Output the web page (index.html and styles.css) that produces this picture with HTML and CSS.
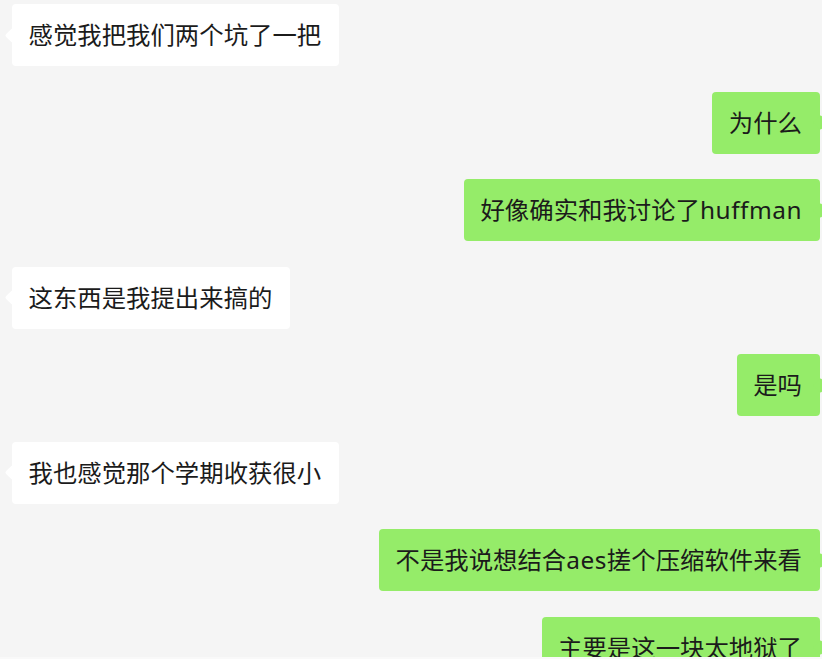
FILE: index.html
```html
<!DOCTYPE html>
<html lang="zh-CN">
<head>
<meta charset="utf-8">
<title>Chat</title>
<link rel="stylesheet" href="styles.css">
</head>
<body>
<div class="chat">
  <div class="msg in">感觉我把我们两个坑了一把</div>
  <div class="msg out">为什么</div>
  <div class="msg out">好像确实和我讨论了<span class="latin">huffman</span></div>
  <div class="msg in">这东西是我提出来搞的</div>
  <div class="msg out">是吗</div>
  <div class="msg in">我也感觉那个学期收获很小</div>
  <div class="msg out">不是我说想结合<span class="latin">aes</span>搓个压缩软件来看</div>
  <div class="msg out">主要是这一块太地狱了</div>
</div>
<div class="bottom-edge"></div>
</body>
</html>
```

FILE: styles.css
```css
html, body {
  margin: 0;
  padding: 0;
  overflow: hidden;
  background: #f5f5f5;
}
body {
  width: 822px;
  height: 659px;
}
.chat {
  display: flex;
  flex-direction: column;
  gap: 25.5px;
  padding: 4px 2px 0 12px;
  font-family: "Noto Sans", "Noto Sans CJK SC", sans-serif;
  font-size: 24.4px;
  color: #1b1b1b;
}
.msg {
  position: relative;
  box-sizing: border-box;
  height: 62px;
  line-height: 62px;
  padding: 0 18px 0 16.5px;
  border-radius: 4px;
  white-space: nowrap;
}
.latin {
  letter-spacing: 0.5px;
}
.msg::before {
  content: "";
  position: absolute;
  top: 50%;
  width: 11px;
  height: 11px;
  margin-top: -5.5px;
  border-radius: 2px;
  transform: rotate(45deg);
  background: inherit;
}
.in {
  align-self: flex-start;
  background: #ffffff;
}
.in::before {
  left: -5.5px;
}
.out {
  align-self: flex-end;
  background: #95ec69;
}
.out::before {
  right: -5.5px;
}
.bottom-edge {
  position: fixed;
  left: 0;
  right: 0;
  bottom: 0;
  height: 2px;
  background: #f9f9f9;
}
```
